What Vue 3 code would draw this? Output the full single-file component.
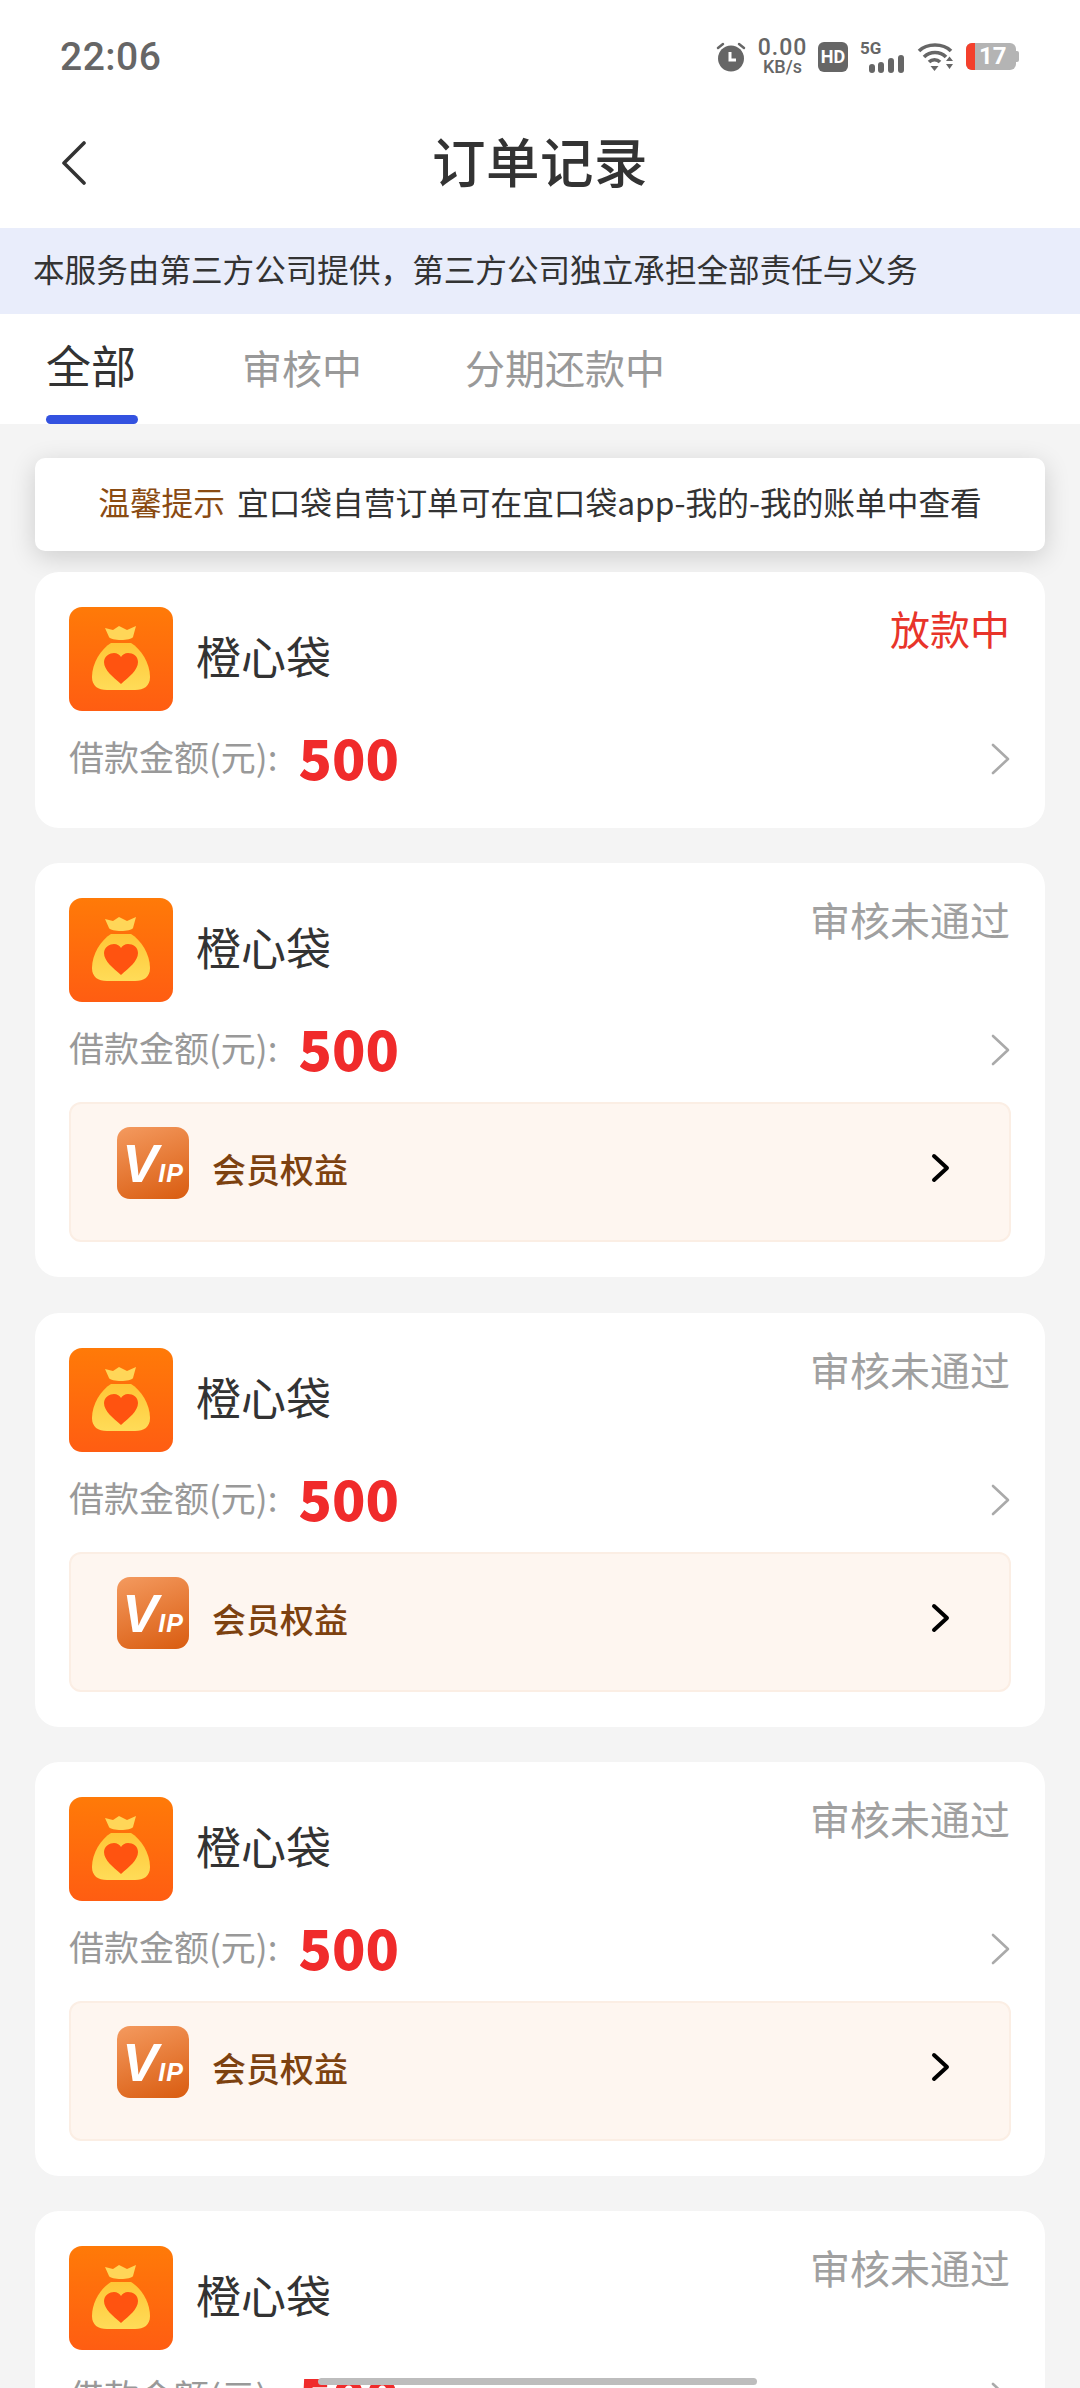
<script setup>
const tabs = ['全部', '审核中', '分期还款中']
const orders = [
  { id: 1, status: '放款中', active: true, vip: false },
  { id: 2, status: '审核未通过', active: false, vip: true },
  { id: 3, status: '审核未通过', active: false, vip: true },
  { id: 4, status: '审核未通过', active: false, vip: true },
  { id: 5, status: '审核未通过', active: false, vip: true }
]
</script>

<template>
  <div class="page">
    <header class="status">
      <span class="time">22:06</span>
      <div class="sys">
        <svg class="alarm" viewBox="0 0 30 30" width="30" height="30">
          <circle cx="15" cy="16.500" r="13" fill="#666" />
          <path d="M2 6 L7 2 M28 6 L23 2" stroke="#666" stroke-width="2.500" stroke-linecap="round" />
          <path d="M14 10 V18 H20" stroke="#fff" stroke-width="3" fill="none" />
        </svg>
        <div class="speed"><span class="speed-n">0.00</span><span class="speed-u">KB/s</span></div>
        <span class="hd">HD</span>
        <div class="net">
          <span class="five">5G</span>
          <svg viewBox="0 0 36 18" width="36" height="18">
            <rect x="1" y="9" width="6" height="9" rx="3" fill="#666" />
            <rect x="10" y="7" width="6" height="11" rx="3" fill="#666" />
            <rect x="20" y="3" width="6" height="15" rx="3" fill="#666" />
            <rect x="30" y="0" width="6" height="18" rx="3" fill="#666" />
          </svg>
        </div>
        <svg class="wifi" viewBox="0 0 38 30" width="38" height="30">
          <path d="M2 9 C10 1 26 1 34 9 M7 15 C13 9 23 9 29 15 M12 20 C15 17 20 17 23 20" fill="none" stroke="#666" stroke-width="3.600" />
          <path d="M13.500 24 H21.500 L17.500 29 Z" fill="#666" />
          <path d="M29 19 L32.500 14.500 L36 19 Z M29 22 H36 L32.500 27 Z" fill="#666" />
        </svg>
        <div class="battery">
          <span class="battery-low"></span>
          <span class="battery-n">17</span>
          <span class="battery-cap"></span>
        </div>
      </div>
    </header>

    <nav class="nav">
      <svg class="back" viewBox="0 0 28 44" width="28" height="44">
        <path d="M24 2 L4 22 L24 42" fill="none" stroke="#333" stroke-width="3.600" stroke-linecap="round" stroke-linejoin="round" />
      </svg>
      <h1 class="title">订单记录</h1>
    </nav>

    <div class="banner">本服务由第三方公司提供，第三方公司独立承担全部责任与义务</div>

    <div class="tabs">
      <div v-for="(t, i) in tabs" :key="t" class="tab" :class="{ on: i === 0 }">{{ t }}</div>
    </div>

    <main class="list">
      <div class="notice"><span class="notice-k">温馨提示</span><span class="notice-t">宜口袋自营订单可在宜口袋app-我的-我的账单中查看</span></div>

      <section v-for="o in orders" :key="o.id" class="card">
        <div class="head">
          <svg class="logo" viewBox="0 0 104 104" width="104" height="104">
            <defs>
              <linearGradient :id="'bg' + o.id" x1="0" y1="0" x2="0" y2="1">
                <stop offset="0" stop-color="#ff7a08" />
                <stop offset="1" stop-color="#ff5d12" />
              </linearGradient>
              <linearGradient :id="'bag' + o.id" x1="0" y1="0" x2="0" y2="1">
                <stop offset="0" stop-color="#ffc636" />
                <stop offset="1" stop-color="#ffdc58" />
              </linearGradient>
            </defs>
            <rect width="104" height="104" rx="13" :fill="'url(#bg' + o.id + ')'" />
            <path d="M36 21 L44 23 L50 19 L58 23 L67 19 L64 30 C62 34 42 34 40 30 Z" fill="#ffd658" />
            <path d="M42 36 H62 C72 42 81 56 81 70 C81 79 75 83 66 83 H38 C29 83 23 79 23 70 C23 56 32 42 42 36 Z" :fill="'url(#bag' + o.id + ')'" />
            <path d="M52 77 C44 70 35 63 35 55 C35 49 41 46 45 46 C48 46 51 48 52 50 C53 48 56 46 59 46 C64 46 69 49 69 55 C69 63 60 70 52 77 Z" fill="#ff5310" />
          </svg>
          <span class="name">橙心袋</span>
          <span class="state" :class="{ live: o.active }">{{ o.status }}</span>
        </div>
        <div class="amount">
          <span class="label">借款金额(元):</span>
          <span class="money">500</span>
          <svg class="more" viewBox="0 0 20 32" width="20" height="32">
            <path d="M2 2 L17 16 L2 30" fill="none" stroke="#aaa" stroke-width="2.600" stroke-linecap="round" stroke-linejoin="round" />
          </svg>
        </div>
        <div v-if="o.vip" class="vip">
          <div class="badge"><span class="badge-v">V</span><span class="badge-ip">IP</span></div>
          <span class="vip-t">会员权益</span>
          <svg class="vip-go" viewBox="0 0 20 30" width="20" height="30">
            <path d="M3 3 L16 15 L3 27" fill="none" stroke="#000" stroke-width="4" stroke-linecap="round" stroke-linejoin="round" />
          </svg>
        </div>
      </section>
    </main>

    <div class="gesture"></div>
  </div>
</template>

<style>
html, body { margin: 0; padding: 0; background: #f4f4f4; overflow: hidden; }
</style>

<style scoped>
.page {
  position: relative;
  width: 1080px;
  height: 2388px;
  overflow: hidden;
  background: #f4f4f4;
  font-family: "Noto Sans CJK SC", "Noto Sans", sans-serif;
}
.status {
  height: 100px;
  box-sizing: border-box;
  background: #fff;
  display: flex;
  align-items: center;
  justify-content: space-between;
  padding: 13px 64px 0 60px;
}
.time { font: 500 39px Roboto, sans-serif; color: #666; letter-spacing: 0.500px; }
.sys { display: flex; align-items: center; }
.alarm { margin-right: 11px; }
.speed { display: flex; flex-direction: column; align-items: center; color: #666; font-family: Roboto, sans-serif; line-height: 1; width: 51px; margin-right: 10px; }
.speed-n { font-size: 23px; line-height: 19px; letter-spacing: 1px; font-weight: 500; }
.speed-u { font-size: 18px; line-height: 17px; font-weight: 500; margin-top: 1px; }
.hd { width: 30px; height: 30px; border-radius: 6px; background: #666; color: #fff; font: 700 18px/30px Roboto, sans-serif; text-align: center; margin-right: 12px; }
.net { position: relative; width: 44px; height: 32px; margin-right: 13px; }
.five { position: absolute; left: 0; top: 0; font: 700 17px/15px Roboto, sans-serif; color: #666; }
.net svg { position: absolute; right: 0; bottom: 0; }
.wifi { margin-right: 11px; }
.battery { position: relative; width: 50px; height: 27px; background: #b4b4b4; border-radius: 6px; }
.battery-low { position: absolute; left: 0; top: 0; width: 9px; height: 27px; background: #f4402c; border-radius: 6px 0 0 6px; }
.battery-n { position: absolute; left: 13px; top: 0; font: 700 24px/27px Roboto, sans-serif; color: #fff; }
.battery-cap { position: absolute; right: -3px; top: 8px; width: 3px; height: 11px; background: #b4b4b4; border-radius: 0 2px 2px 0; }
.nav {
  position: relative;
  height: 128px;
  box-sizing: border-box;
  padding-bottom: 10px;
  background: #fff;
  display: flex;
  align-items: center;
  justify-content: center;
}
.back { position: absolute; left: 60px; top: 41px; }
.title { margin: 0; font-size: 53.500px; font-weight: 500; color: #333; letter-spacing: 0.500px; }
.banner {
  height: 86px;
  background: #e9edfb;
  color: #333;
  font-size: 31.600px;
  line-height: 81px;
  padding-left: 33px;
  white-space: nowrap;
}
.tabs {
  height: 110px;
  box-sizing: border-box;
  background: #fff;
  display: flex;
  padding-left: 46px;
}
.tab {
  position: relative;
  margin-right: 103px;
  font-size: 40px;
  color: #999;
  line-height: 106px;
}
.tab:nth-child(1) { margin-right: 104px; width: 92px; }
.tab.on { font-size: 45px; color: #333; line-height: 102px; }
.tab.on::after {
  content: "";
  position: absolute;
  left: 0;
  right: 0;
  bottom: 0;
  height: 9px;
  border-radius: 5px;
  background: #3352e0;
}
.list { padding: 34px 35px 0; }
.notice {
  height: 93px;
  background: #fff;
  border-radius: 10px;
  box-shadow: 0 6px 26px rgba(0, 0, 0, 0.16);
  display: flex;
  align-items: center;
  justify-content: center;
  font-size: 31.700px;
  line-height: 84px;
  padding-bottom: 8px;
  box-sizing: border-box;
  white-space: nowrap;
  margin-bottom: 21px;
}
.notice-k { color: #8a4b12; margin-right: 12px; }
.notice-t { color: #333; }
.card {
  background: #fff;
  border-radius: 24px;
  padding: 35px 34px 35px;
  margin-bottom: 35.250px;
}
.head { display: flex; align-items: flex-start; }
.logo { flex: none; }
.name { margin: 19px 0 0 23px; font-size: 45px; line-height: 60px; color: #333; }
.state { margin-left: auto; margin-right: 1px; margin-top: -6px; font-size: 40px; line-height: 54px; color: #a0a0a0; }
.state.live { color: #e8342a; }
.amount { margin-top: 14px; height: 68px; display: flex; align-items: center; }
.label { font-size: 35px; line-height: 62px; color: #999; white-space: nowrap; margin-bottom: 6px; }
.money { margin-left: 21px; margin-bottom: 5px; font-size: 55px; font-weight: 900; color: #f02b2b; line-height: 63px; }
.more { margin-left: auto; margin-right: 0; }
.vip {
  margin-top: 18px;
  height: 140px;
  box-sizing: border-box;
  display: flex;
  align-items: flex-start;
  background: #fef6f0;
  border: 2px solid #fbeee4;
  border-radius: 12px;
}
.badge {
  margin: 23px 0 0 46px;
  padding-top: 5px;
  box-sizing: border-box;
  width: 72px;
  height: 72px;
  flex: none;
  border-radius: 13px;
  background: linear-gradient(160deg, #f49a5f, #d95c10);
  display: flex;
  align-items: baseline;
  justify-content: center;
  color: #fff;
  font: italic 900 54px/62px "Liberation Sans", sans-serif;
  overflow: hidden;
}
.badge-ip { font-size: 25px; letter-spacing: 1px; }
.vip-t { margin: 40px 0 0 23px; font-size: 34px; line-height: 50px; color: #7d4210; font-weight: 500; }
.vip-go { margin: 49px 58px 0 auto; }
.gesture {
  position: absolute;
  left: 318px;
  top: 2378px;
  width: 439px;
  height: 7px;
  border-radius: 4px;
  background: #bdbdbd;
}
</style>
